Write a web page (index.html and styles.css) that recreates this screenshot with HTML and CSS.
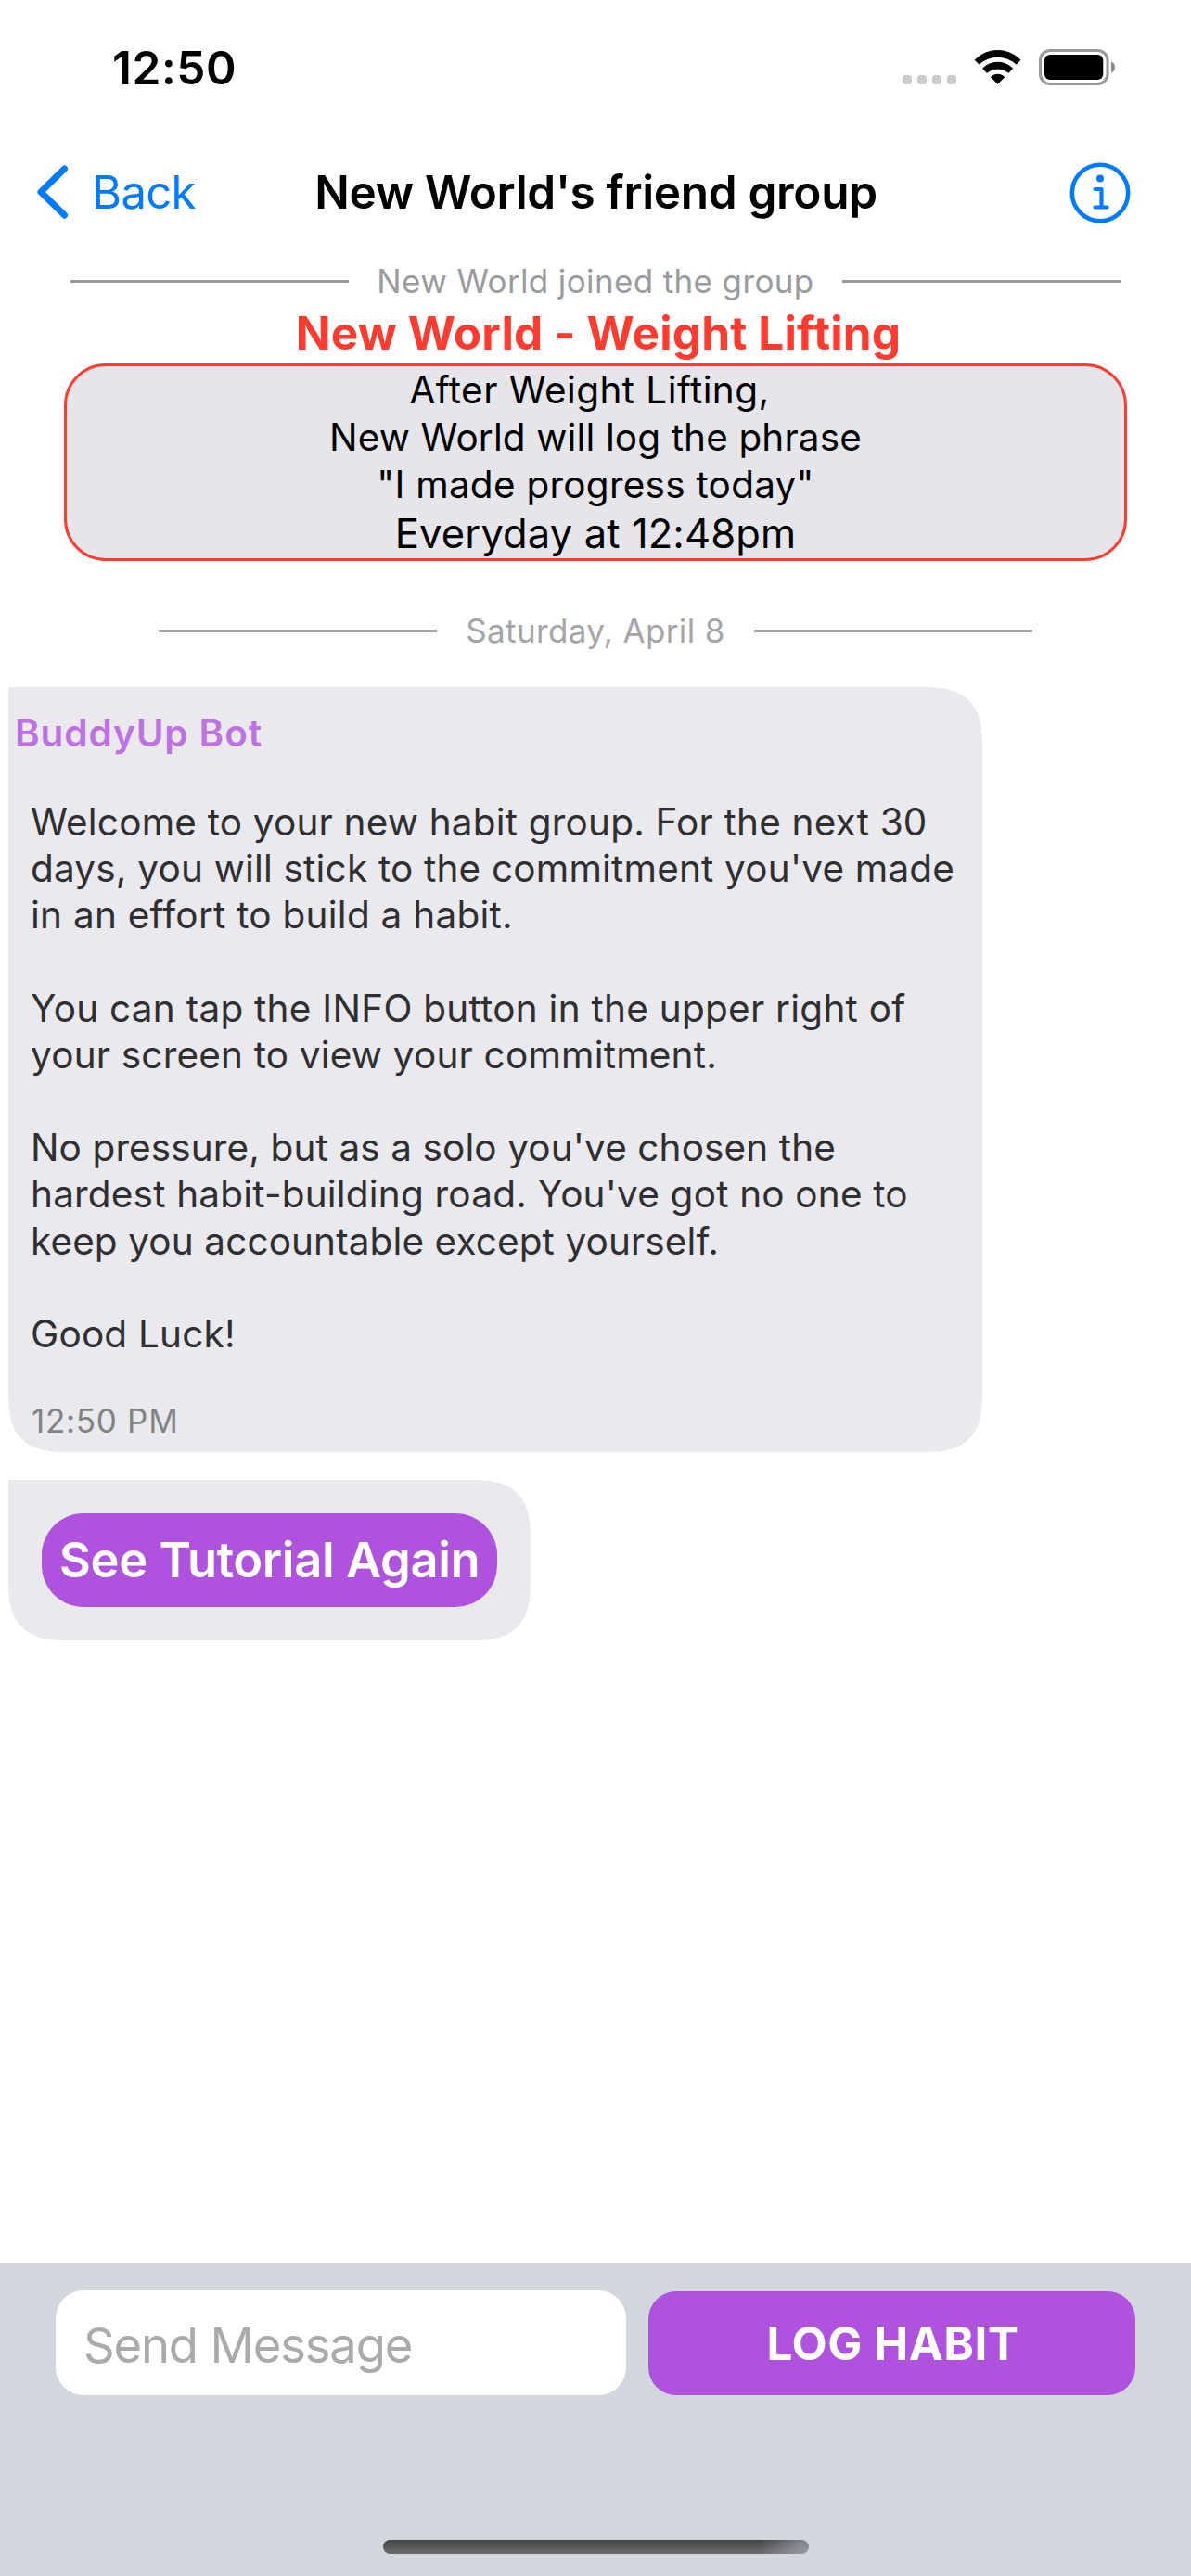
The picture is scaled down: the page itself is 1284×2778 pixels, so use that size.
FILE: index.html
```html
<!DOCTYPE html>
<html lang="en">
<head>
<meta charset="utf-8">
<title>New World's friend group</title>
<link rel="stylesheet" href="styles.css">
</head>
<body>
<div class="screen">
  <div class="status-bar">
    <span class="clock">12:50</span>
    <svg class="status-icons" width="229" height="40" viewBox="0 0 229 40" aria-hidden="true">
      <g fill="#cbcbcb">
        <rect x="0" y="28" width="10" height="10" rx="3.5"/>
        <rect x="16" y="28" width="10" height="10" rx="3.5"/>
        <rect x="32" y="28" width="10" height="10" rx="3.5"/>
        <rect x="48" y="28" width="10" height="10" rx="3.5"/>
      </g>
      <g fill="#000" stroke="#000" stroke-width="1" stroke-linejoin="round">
        <path d="M78.2 11.7A34.1 34.1 0 0 1 127 11.7L122.6 16.1A29.6 29.6 0 0 0 82.6 16.1Z"/>
        <path d="M86.6 20.7A23 23 0 0 1 118.6 20.7L114.4 25.3A18.6 18.6 0 0 0 90.8 25.3Z"/>
        <path d="M95.4 30A10.8 10.8 0 0 1 109.8 30L102.6 37.3Z"/>
      </g>
      <rect x="148.5" y="1.5" width="72.5" height="36" rx="10.5" fill="none" stroke="#999" stroke-width="3"/>
      <rect x="153" y="6" width="63.300" height="27" rx="6" fill="#000"/>
      <path d="M225 13.500A6.500 6.500 0 0 1 225 25.500Z" fill="#8a8a8a"/>
    </svg>
  </div>

  <header class="nav">
    <a class="back">
      <svg width="34" height="58" viewBox="0 0 34 58" aria-hidden="true"><path d="M29.500 4L4 29L29.500 54" fill="none" stroke="#007aff" stroke-width="7" stroke-linecap="round" stroke-linejoin="round"/></svg>
      <span class="back-label">Back</span>
    </a>
    <h1 class="nav-title">New World's friend group</h1>
    <svg class="info" width="66" height="66" viewBox="0 0 66 66" aria-hidden="true">
      <g fill="none" stroke="#007aff" stroke-linecap="round" stroke-linejoin="round">
        <circle cx="33" cy="33" r="30.200" stroke-width="4.600"/>
        <path d="M27.500 29H34.500V48.500M27.500 48.500H40.500" stroke-width="4.200"/>
      </g>
      <circle cx="33" cy="17.500" r="4" fill="#007aff"/>
    </svg>
  </header>

  <main class="chat">
    <div class="divider joined"><span class="divider-text">New World joined the group</span></div>
    <h2 class="habit-title">New World - Weight Lifting</h2>
    <section class="commitment">
      <p class="line first">After Weight Lifting,</p>
      <p class="line second">New World will log the phrase</p>
      <p class="line third">"I made progress today"</p>
      <p class="line schedule">Everyday at 12:48pm</p>
    </section>
    <div class="divider date"><span class="divider-text">Saturday, April 8</span></div>

    <article class="bubble message">
      <div class="sender">BuddyUp Bot</div>
      <div class="body">Welcome to your new habit group. For the next 30
days, you will stick to the commitment you've made
<span class="loose">in an effort to build a habit.</span>

<span class="loose">You can tap the INFO button in the upper right of</span>
your screen to view your commitment.

<span class="tight">No pressure, but as a solo you've chosen the</span>
hardest habit-building road. You've got no one to
<span class="tight">keep you accountable except yourself.</span>

Good Luck!
</div>
      <div class="time">12:50 PM</div>
    </article>

    <article class="bubble tutorial">
      <button class="tutorial-button">See Tutorial Again</button>
    </article>
  </main>

  <footer class="composer">
    <div class="composer-row">
      <div class="field">Send Message</div>
      <button class="log-button">LOG HABIT</button>
    </div>
    <div class="home-indicator"></div>
  </footer>
</div>
</body>
</html>
```
FILE: styles.css
```css
* { box-sizing: border-box; }

body, h1, h2, p { margin: 0; }

body {
  background: #fff;
  color: #000;
  font-family: Inter, "Liberation Sans", sans-serif;
}

button {
  border: 0;
  padding: 0;
  font-family: inherit;
  color: #fff;
  background: #af52de;
}

.screen {
  width: 1284px;
  height: 2778px;
  display: flex;
  flex-direction: column;
  white-space: nowrap;
  overflow: hidden;
}

/* Status bar */
.status-bar {
  height: 146px;
  padding: 0 82px 0 121px;
  display: flex;
  align-items: center;
  justify-content: space-between;
}

.clock { font-size: 49.5px; font-weight: 600; letter-spacing: 0.6px; }

/* Navigation */
.nav {
  height: 122px;
  padding: 0 65px 0 40px;
  display: grid;
  grid-template-columns: 1fr auto 1fr;
  align-items: center;
}

.back { display: flex; align-items: center; gap: 25px; color: #007aff; }
.back-label { font-size: 49px; letter-spacing: -0.66px; }
.nav-title { font-size: 49.5px; font-weight: 600; letter-spacing: -0.32px; margin-left: 26px; }
.info { justify-self: end; margin-top: 1px; }

/* Conversation */
.chat { flex: 1; display: flex; flex-direction: column; }

.divider {
  display: flex;
  align-items: center;
  justify-content: center;
  gap: 30px;
  font-size: 35px;
  letter-spacing: 0.37px;
}

.divider-text { padding-bottom: 2px; }

.divider::before,
.divider::after {
  content: "";
  width: 300px;
  height: 3px;
  background: currentColor;
}

.joined { height: 71px; color: #9b9b9f; }
.date { height: 136px; padding-top: 15px; gap: 31px; color: #a5a5a9; }

.habit-title {
  padding-left: 6px;
  margin-bottom: 13px;
  font-size: 49.5px;
  line-height: 40px;
  font-weight: 700;
  letter-spacing: 0.16px;
  text-align: center;
  color: #ff3b30;
}

.commitment {
  margin: 0 69px;
  border: 3px solid #ff3b30;
  border-radius: 45px;
  background: #e5e5ea;
  text-align: center;
}

.line { font-size: 40.5px; line-height: 51px; }
.first { padding-right: 13px; letter-spacing: 0.43px; }
.second { letter-spacing: 0.13px; }
.third { letter-spacing: 0.25px; }
.schedule { font-size: 43.5px; line-height: 54px; letter-spacing: 0.11px; }

.bubble {
  margin-left: 9px;
  align-self: flex-start;
  background: #e9e9ee;
  border-radius: 0 50px 50px 50px;
}

@supports (corner-shape: superellipse(1.4)) {
  .bubble {
    border-radius: 0 64px 64px 64px;
    corner-shape: superellipse(1.45);
  }
}

.message { width: 1050px; padding: 25px 0 12px; }

.sender {
  padding-left: 7px;
  font-size: 40.5px;
  line-height: 50px;
  font-weight: 600;
  letter-spacing: 0.89px;
  color: #bd72e4;
}

.body {
  height: 602px;
  margin: 46px 0;
  padding-left: 24px;
  font-size: 40.5px;
  line-height: 50.17px;
  letter-spacing: 0.19px;
  white-space: pre;
  color: #2f2f31;
}

.loose { letter-spacing: 0.26px; }
.tight { letter-spacing: 0.11px; }

.time {
  padding-left: 25px;
  font-size: 35px;
  line-height: 44px;
  letter-spacing: 0.71px;
  color: #838385;
}

.tutorial { margin-top: 30px; padding: 36px; }

.tutorial-button {
  display: block;
  width: 491px;
  height: 101px;
  padding-bottom: 2px;
  border-radius: 45px;
  font-size: 52.5px;
  font-weight: 600;
  letter-spacing: -0.41px;
}

/* Composer */
.composer {
  height: 338px;
  padding: 30px 60px 24px;
  display: flex;
  flex-direction: column;
  justify-content: space-between;
  align-items: center;
  background: #d2d6dd;
}

.composer-row {
  width: 100%;
  display: flex;
  align-items: flex-end;
  gap: 24px;
}

.field {
  width: 615px;
  height: 113px;
  padding: 5px 30px 0;
  display: flex;
  align-items: center;
  border-radius: 30px;
  background: #fff;
  color: #aaa;
  font-size: 52.5px;
  letter-spacing: -1.15px;
}

.log-button {
  width: 525px;
  height: 112px;
  padding-left: 2px;
  border-radius: 30px;
  font-size: 49.5px;
  font-weight: 700;
  letter-spacing: 0.54px;
}

.home-indicator {
  width: 459px;
  height: 15px;
  border-radius: 8px;
  background:
    linear-gradient(105deg, transparent 88%, rgba(190, 198, 206, 0.5) 98%),
    linear-gradient(#434446, #6a6b6c);
}
```
